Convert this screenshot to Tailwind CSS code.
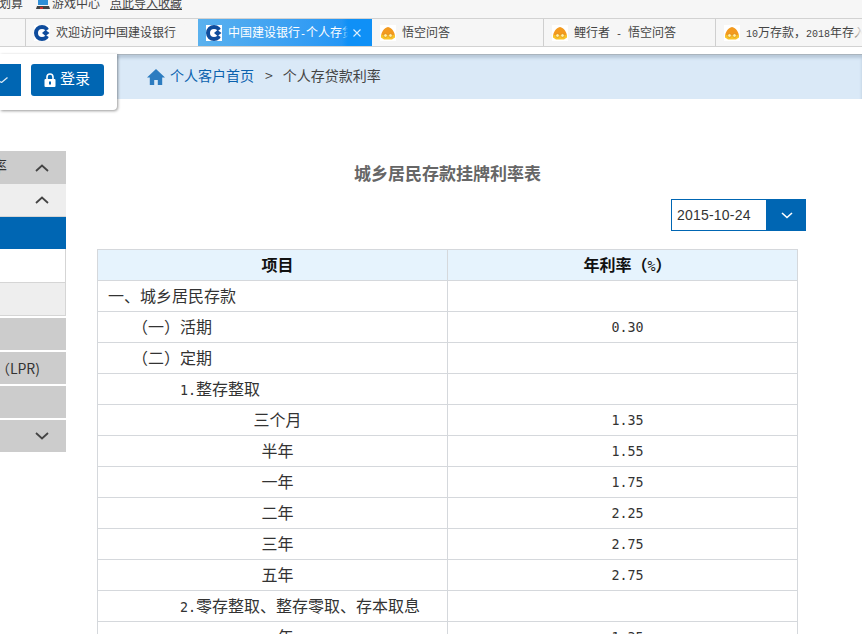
<!DOCTYPE html>
<html lang="zh-CN">
<head>
<meta charset="utf-8">
<title>城乡居民存款挂牌利率表</title>
<script src="https://cdn.jsdelivr.net/npm/@tailwindcss/browser@4"></script>
</head>
<body class="w-[862px] h-[634px] overflow-hidden relative bg-white font-['Noto_Sans_CJK_SC',sans-serif] text-[#333] [text-spacing-trim:space-all]">
<!-- browser favourites bar -->
<div class="h-[18px] bg-[#f6f6f6] overflow-hidden flex items-start text-[12px] leading-[6px] text-[#444]">
  <span class="-ml-[1px] w-[36px]">划算</span>
  <svg class="w-[16px] h-[10px] shrink-0" viewBox="0 0 16 10"><path d="M3 0h10v5H3z" fill="#2f8fd8"/><path d="M2 6h12l1 3H1z" fill="#444"/><path d="M5 7h3v2H5z" fill="#c33"/></svg>
  <span class="ml-[1px] w-[48px]">游戏中心</span>
  <span class="ml-[10px] underline">点此导入收藏</span>
</div>
<!-- browser tabs -->
<div class="h-[29px] bg-[#f6f6f6] border-y border-[#d2d2d2] flex text-[12px] leading-[16px] text-[#444]">
  <div class="w-[26px] shrink-0 border-r border-[#cfcfcf]"></div>
  <div class="w-[172px] shrink-0 flex items-center pl-[8px] gap-[6px] relative overflow-hidden">
    <svg class="w-[16px] h-[16px] shrink-0 bg-white" viewBox="0 0 16 16"><circle cx="8" cy="8" r="6" fill="none" stroke="#0f4c9c" stroke-width="4"/><path d="M16 3 9 8l7 5z" fill="#fff"/><path d="M15.500 8 11.500 5 8 8l3.500 3z" fill="#0f4c9c"/></svg>
    <span class="whitespace-nowrap pb-[2px]">欢迎访问中国建设银行</span>
    <div class="absolute right-0 top-0 bottom-0 w-[26px] bg-gradient-to-r from-[#f6f6f6]/0 to-[#f6f6f6] to-[70%]"></div>
  </div>
  <div class="w-[174px] shrink-0 flex items-center pl-[8px] gap-[6px] relative overflow-hidden bg-gradient-to-r from-[#5ab1ee] to-[#0f90f6] text-white">
    <svg class="w-[16px] h-[16px] shrink-0 bg-white" viewBox="0 0 16 16"><circle cx="8" cy="8" r="6" fill="none" stroke="#0f4c9c" stroke-width="4"/><path d="M16 3 9 8l7 5z" fill="#fff"/><path d="M15.500 8 11.500 5 8 8l3.500 3z" fill="#0f4c9c"/></svg>
    <span class="whitespace-nowrap pb-[2px]">中国建设银行<span class="font-['Liberation_Mono'] text-[10px] leading-none">-</span>个人存贷</span>
    <div class="absolute right-0 top-0 bottom-0 w-[30px] bg-gradient-to-r from-[#0f90f6]/0 to-[#0f90f6] to-[20%] flex items-center justify-end pr-[11px]">
      <svg class="w-[8px] h-[8px]" viewBox="0 0 8 8"><path d="M.5.500l7 7M7.500.500l-7 7" stroke="#dff0ff" stroke-width="1.100"/></svg>
    </div>
  </div>
  <div class="w-[172px] shrink-0 flex items-center pl-[8px] gap-[6px] border-r border-[#cfcfcf]">
    <svg class="w-[16px] h-[16px] shrink-0 bg-white" viewBox="0 0 16 16"><path d="M1 12C1 7 4 3 8 2c4 1 7 5 7 10z" fill="#f39a1f"/><path d="M1 10h14v2.500l-3 2H4l-3-2z" fill="#f9c326"/><circle cx="5.500" cy="10.500" r="1.800" fill="#fff2a8" stroke="#d9870f" stroke-width=".6"/><circle cx="10.500" cy="10.500" r="1.800" fill="#fff2a8" stroke="#d9870f" stroke-width=".6"/></svg>
    <span class="whitespace-nowrap pb-[2px]">悟空问答</span>
  </div>
  <div class="w-[172px] shrink-0 flex items-center pl-[8px] gap-[6px] border-r border-[#cfcfcf]">
    <svg class="w-[16px] h-[16px] shrink-0 bg-white" viewBox="0 0 16 16"><path d="M1 12C1 7 4 3 8 2c4 1 7 5 7 10z" fill="#f39a1f"/><path d="M1 10h14v2.500l-3 2H4l-3-2z" fill="#f9c326"/><circle cx="5.500" cy="10.500" r="1.800" fill="#fff2a8" stroke="#d9870f" stroke-width=".6"/><circle cx="10.500" cy="10.500" r="1.800" fill="#fff2a8" stroke="#d9870f" stroke-width=".6"/></svg>
    <span class="whitespace-nowrap pb-[2px]">鲤行者<span class="font-['Liberation_Mono'] text-[10px] leading-none whitespace-pre"> - </span>悟空问答</span>
  </div>
  <div class="flex-1 min-w-0 flex items-center pl-[8px] gap-[6px] overflow-hidden relative">
    <svg class="w-[16px] h-[16px] shrink-0 bg-white" viewBox="0 0 16 16"><path d="M1 12C1 7 4 3 8 2c4 1 7 5 7 10z" fill="#f39a1f"/><path d="M1 10h14v2.500l-3 2H4l-3-2z" fill="#f9c326"/><circle cx="5.500" cy="10.500" r="1.800" fill="#fff2a8" stroke="#d9870f" stroke-width=".6"/><circle cx="10.500" cy="10.500" r="1.800" fill="#fff2a8" stroke="#d9870f" stroke-width=".6"/></svg>
    <span class="whitespace-nowrap pb-[2px]"><span class="font-['Liberation_Mono'] text-[10px] leading-none">10</span>万存款，<span class="font-['Liberation_Mono'] text-[10px] leading-none">2018</span>年存入</span>
    <div class="absolute right-0 top-0 bottom-0 w-[10px] bg-gradient-to-r from-[#f6f6f6]/0 to-[#f6f6f6]"></div>
  </div>
</div>
<div class="h-[7px] bg-white"></div>
<!-- breadcrumb -->
<div class="h-[45px] bg-[#dae9f7] border-t border-[#aab4bd] shadow-[inset_0_3px_3px_rgba(120,140,160,0.35)] pl-[147px] flex items-center text-[14px] leading-[20px]">
  <svg class="w-[18px] h-[18px] shrink-0" viewBox="0 0 18 18"><path d="M9 1 0 9.500h2.800V17h4.400v-5h3.600v5h4.400V9.500H18z" fill="#2c7cc0"/></svg>
  <span class="ml-[5px] pb-[4px] text-[#0a62ae]">个人客户首页</span>
  <span class="ml-[11px] pb-[4px] text-[#444]">&gt;</span>
  <span class="ml-[10px] pb-[4px] text-[#444]">个人存贷款利率</span>
</div>
<!-- login card overlay -->
<div class="absolute left-0 top-[54px] w-[117px] h-[56px] bg-white rounded-br-[4px] shadow-[1px_1px_3px_rgba(0,0,0,0.4)] z-10">
  <div class="absolute left-0 top-[10px] w-[21px] h-[32px] bg-[#0066b3] flex items-center">
    <svg class="w-[8px] h-[6px]" viewBox="0 0 8 6"><path d="M0 4.500 1.500 5.500 7.500.500" fill="none" stroke="#dbe9f5" stroke-width="1.300"/></svg>
  </div>
  <div class="absolute left-[31px] top-[10px] w-[73px] h-[32px] bg-[#0066b3] rounded-[3px] flex items-center text-white text-[15px] leading-[20px] pl-[13px] gap-[4px]">
    <svg class="w-[12px] h-[14px] shrink-0" viewBox="0 0 12 14"><path d="M3 6V4a3 3 0 0 1 6 0v2" fill="none" stroke="#fff" stroke-width="1.600"/><rect x="0.500" y="6" width="11" height="8" rx="1" fill="#fff"/><rect x="5" y="8.500" width="2" height="3" fill="#0066b3"/></svg>
    <span class="pb-[5px]">登录</span>
  </div>
</div>
<!-- main area -->
<div class="flex items-start">
  <aside class="w-[66px] shrink-0 mt-[52px] text-[14px] leading-[20px]">
    <div class="h-[33px] bg-[#cccccc] flex items-center justify-between pr-[17px] overflow-hidden">
      <span class="-ml-[9px] pb-[6px] text-[16px]">率</span>
      <svg class="w-[14px] h-[8px]" viewBox="0 0 14 8"><path d="M1 7 7 1.500 13 7" fill="none" stroke="#444" stroke-width="1.800"/></svg>
    </div>
    <div class="h-[33px] bg-[#eeeeee] border-b border-[#d5d5d5] flex items-center justify-end pr-[17px]">
      <svg class="w-[14px] h-[8px]" viewBox="0 0 14 8"><path d="M1 7 7 1.500 13 7" fill="none" stroke="#444" stroke-width="1.800"/></svg>
    </div>
    <div class="h-[32px] bg-[#0066b3]"></div>
    <div class="h-[34px] bg-white border-r border-b border-[#d5d5d5]"></div>
    <div class="h-[33px] bg-[#eeeeee] border-r border-b border-[#d5d5d5]"></div>
    <div class="h-[32px] bg-[#cccccc] mt-[2px]"></div>
    <div class="h-[32px] bg-[#cccccc] mt-[2px] flex items-center justify-end pr-[26px] whitespace-nowrap"><span>（LPR)</span></div>
    <div class="h-[32px] bg-[#cccccc] mt-[2px]"></div>
    <div class="h-[32px] bg-[#cccccc] mt-[2px] flex items-center justify-end pr-[17px]">
      <svg class="w-[14px] h-[8px]" viewBox="0 0 14 8"><path d="M1 1 7 6.500 13 1" fill="none" stroke="#444" stroke-width="1.800"/></svg>
    </div>
  </aside>
  <main class="ml-[31px] w-[709px] shrink-0">
    <h1 class="mt-[62px] w-[701px] text-center text-[17px] leading-[24px] font-bold text-[#666]">城乡居民存款挂牌利率表</h1>
    <div class="mt-[14px] flex justify-end">
      <div class="w-[135px] h-[32px] flex">
        <div class="w-[96px] border border-[#0066b3] bg-white font-['Liberation_Sans'] text-[14px] tracking-[0.2px] leading-[30px] pl-[5px]">2015-10-24</div>
        <div class="w-[39px] bg-[#0066b3] flex items-center justify-center">
          <svg class="w-[12px] h-[7px]" viewBox="0 0 12 7"><path d="M1 1 6 5.500 11 1" fill="none" stroke="#fff" stroke-width="1.600"/></svg>
        </div>
      </div>
    </div>
    <table class="mt-[18px] w-[701px] table-fixed border-collapse text-[16px] leading-[24px] [&_td]:h-[31px] [&_td]:pb-[2px] [&_td]:border [&_td]:border-[#d5d8dc] [&_th]:h-[31px] [&_th]:pb-[2px] [&_th]:pl-[10px] [&_th]:border [&_th]:border-[#d5d8dc]">
      <thead>
        <tr class="bg-[#e6f3fd] text-[#111]">
          <th class="w-[350px] font-bold">项目</th>
          <th class="font-bold">年利率（<span class="font-['DejaVu_Sans_Mono'] font-normal text-[13.33px] leading-none">%</span>）</th>
        </tr>
      </thead>
      <tbody class="[&_td:last-child]:text-center [&_td:last-child]:pl-[10px] [&_td:last-child]:pb-0 [&_td:last-child]:pt-[2px] [&_td:last-child]:font-['DejaVu_Sans_Mono'] [&_td:last-child]:text-[13.33px]">
        <tr><td class="pl-[10px]">一、城乡居民存款</td><td></td></tr>
        <tr><td class="pl-[34px]">（一）活期</td><td>0.30</td></tr>
        <tr><td class="pl-[34px]">（二）定期</td><td></td></tr>
        <tr><td class="pl-[82px]"><span class="font-['DejaVu_Sans_Mono'] text-[13.33px] leading-none">1.</span>整存整取</td><td></td></tr>
        <tr><td class="pl-[10px] text-center">三个月</td><td>1.35</td></tr>
        <tr><td class="pl-[10px] text-center">半年</td><td>1.55</td></tr>
        <tr><td class="pl-[10px] text-center">一年</td><td>1.75</td></tr>
        <tr><td class="pl-[10px] text-center">二年</td><td>2.25</td></tr>
        <tr><td class="pl-[10px] text-center">三年</td><td>2.75</td></tr>
        <tr><td class="pl-[10px] text-center">五年</td><td>2.75</td></tr>
        <tr><td class="pl-[82px]"><span class="font-['DejaVu_Sans_Mono'] text-[13.33px] leading-none">2.</span>零存整取、整存零取、存本取息</td><td></td></tr>
        <tr><td class="pl-[10px] text-center">一年</td><td>1.35</td></tr>
      </tbody>
    </table>
  </main>
</div>
</body>
</html>
